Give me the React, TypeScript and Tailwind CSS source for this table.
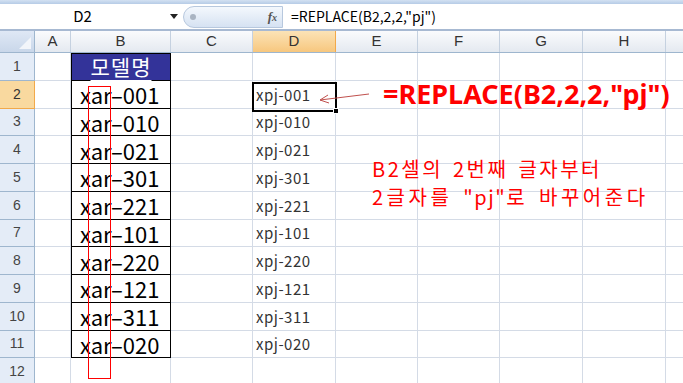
import React from 'react';

const cols = [
  { key: 'A', w: 36 },
  { key: 'B', w: 100 },
  { key: 'C', w: 82 },
  { key: 'D', w: 83 },
  { key: 'E', w: 82 },
  { key: 'F', w: 82 },
  { key: 'G', w: 83 },
  { key: 'H', w: 83 },
  { key: '', w: 83 },
];

const codes = ['001', '010', '021', '301', '221', '101', '220', '121', '311', '020'];

const kr = { fontFamily: '"Noto Sans CJK KR", "Noto Sans", sans-serif' };

export default function App() {
  const rows = Array.from({ length: 12 }, (_, i) => i + 1);

  return (
    <div className="relative w-[683px] h-[383px] overflow-hidden bg-white" style={kr}>
      {/* formula bar */}
      <div className="h-[4px] bg-gradient-to-b from-[#d3e1f2] to-[#b6cbe6]" />
      <div className="flex h-[27px] items-center bg-white border-b-2 border-[#a7b9d2]">
        <div className="w-[165px] text-center text-[15px] text-black">D2</div>
        <div className="w-[18px] flex justify-center">
          <svg width="8" height="5" viewBox="0 0 8 5"><path d="M0 0h8L4 5z" fill="#222" /></svg>
        </div>
        <div className="relative flex items-center h-[22px] w-[100px] rounded-l-full border border-[#b7c8de] bg-gradient-to-b from-[#f4f8fd] to-[#d6e2f2]">
          <div className="ml-[6px] h-[6px] w-[6px] rounded-full bg-[#a9b4c2]" />
          <span className="ml-auto mr-[5px] text-[13px] italic font-bold text-[#555]" style={{ fontFamily: '"Liberation Serif", serif' }}>
            f<span className="text-[10px]">x</span>
          </span>
        </div>
        <div className="ml-[8px] text-[14px] text-black">=REPLACE(B2,2,2,"pj")</div>
      </div>

      {/* column headers */}
      <div className="flex h-[22px] border-b border-[#9eb6ce]">
        <div className="relative w-[35px] shrink-0 border-r border-[#9eb6ce] bg-gradient-to-b from-[#dfe8f5] to-[#c9d7ea]">
          <svg className="absolute right-[3px] bottom-[3px]" width="12" height="12" viewBox="0 0 12 12">
            <path d="M12 0V12H0z" fill="#f2f5fa" />
          </svg>
        </div>
        {cols.map((c, i) => (
          <div
            key={i}
            className={`shrink-0 flex items-center justify-center border-r text-[15px] ${
              c.key === 'D'
                ? 'border-[#f2a94a] bg-gradient-to-b from-[#fbe3b6] to-[#f7c77e] text-[#333]'
                : 'border-[#c5d1e0] bg-gradient-to-b from-[#fafbfd] to-[#e4e9f0] text-[#333]'
            }`}
            style={{ width: c.w, fontFamily: '"Liberation Sans", sans-serif' }}
          >
            {c.key}
          </div>
        ))}
      </div>

      {/* rows */}
      {rows.map((r) => (
        <div key={r} className="flex h-[27.75px]">
          <div
            className={`w-[35px] shrink-0 flex items-center justify-center border-r border-b text-[14px] ${
              r === 2
                ? 'bg-[#f9d99f] border-[#f2a94a] text-[#333]'
                : 'bg-[#e4ecf7] border-[#9eb6ce] text-[#444]'
            }`}
            style={{ fontFamily: '"Liberation Sans", sans-serif' }}
          >
            {r}
          </div>
          {cols.map((c, i) => {
            const isB = c.key === 'B';
            const isD = c.key === 'D';
            let content: React.ReactNode = null;
            let cls = 'border-r border-b border-[#d4dbe6]';
            if (isB && r === 1) {
              cls = 'bg-[#333399] border border-black text-white justify-center';
              content = (
                <span className="text-[21px] tracking-[1px] underline underline-offset-[5px] decoration-1 leading-none">
                  모델명
                </span>
              );
            } else if (isB && r <= 11) {
              cls = 'border-x border-b border-black pl-[8px]';
              content = <span className="text-[22px] leading-none text-black whitespace-nowrap">xar–{codes[r - 2]}</span>;
            } else if (isD && r >= 2 && r <= 11) {
              content = (
                <span className="pl-[3px] text-[15px] tracking-[0.5px] leading-none text-[#333] whitespace-nowrap">
                  xpj-{codes[r - 2]}
                </span>
              );
            }
            return (
              <div key={i} className={`shrink-0 flex items-center ${cls}`} style={{ width: c.w }}>
                {content}
              </div>
            );
          })}
        </div>
      ))}

      {/* selected cell D2 */}
      <div className="absolute left-[252px] top-[82px] w-[85px] h-[30px] border-2 border-black pointer-events-none">
        <div className="absolute -right-[4px] -bottom-[4px] w-[6px] h-[6px] bg-black border border-white" />
      </div>

      {/* red box over B column */}
      <div className="absolute left-[88px] top-[86px] w-[23px] h-[293px] border border-[#ff0000]" />

      {/* arrow */}
      <svg className="absolute left-[315px] top-[90px]" width="60" height="16" viewBox="0 0 60 16">
        <path d="M54 4L5 10" stroke="#c0504d" strokeWidth="1" fill="none" />
        <path d="M13 5L5 10L14 13" stroke="#c0504d" strokeWidth="1" fill="none" />
      </svg>

      {/* formula callout */}
      <div
        className="absolute left-[383px] top-[80px] text-[27px] font-bold text-[#ff0000] leading-none whitespace-nowrap"
        style={{ fontFamily: '"Noto Sans", "Open Sans", sans-serif' }}
      >
        =REPLACE(B2,2,2,"pj")
      </div>

      {/* explanation */}
      <div className="absolute left-[372px] top-[155px] text-[20px] text-[#ff0000] leading-[28px] whitespace-nowrap">
        <div className="tracking-[2.5px] [word-spacing:3px]">B2셀의 2번째 글자부터</div>
        <div className="tracking-[3.5px] [word-spacing:3px]">
          2글자를 <span className="tracking-[1.5px]">"pj"</span>로 바꾸어준다
        </div>
      </div>
    </div>
  );
}
